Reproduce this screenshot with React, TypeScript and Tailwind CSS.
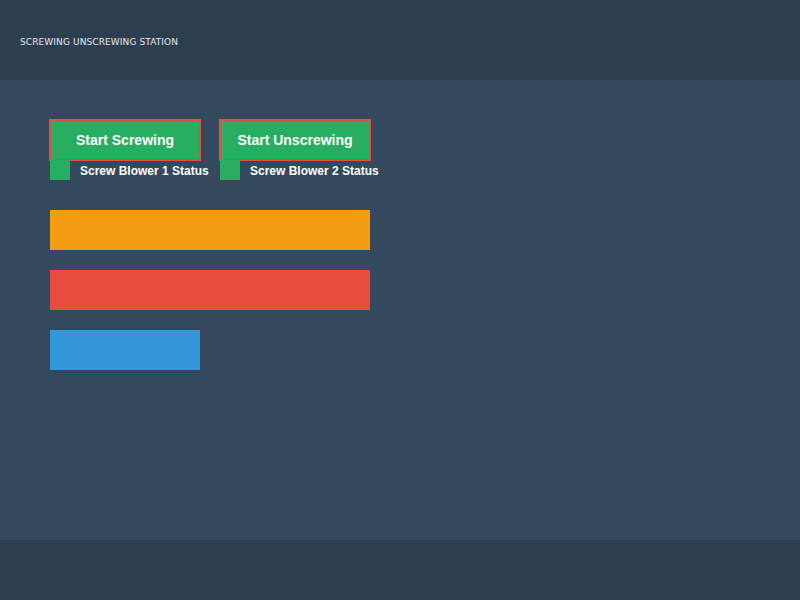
export default function App() {
  const stations = [
    { label: "Start Screwing", status: "Screw Blower 1 Status" },
    { label: "Start Unscrewing", status: "Screw Blower 2 Status" },
  ]

  return (
    <div className="w-[800px] h-[600px] flex flex-col font-['Liberation_Sans',Arial,sans-serif]">
      {/* Header */}
      <div className="h-[80px] bg-[#2c3e50] flex items-center pl-5 pt-[5px]">
        <span className="text-[9px] text-[#e6e9ec] font-['DejaVu_Sans',sans-serif] tracking-[0.1px]">
          SCREWING UNSCREWING STATION
        </span>
      </div>

      {/* Main */}
      <div className="h-[460px] bg-[#34495e] pt-[39px] pl-[49px]">
        <div className="flex gap-[18px]">
          {stations.map((s) => (
            <div key={s.label} className="w-[152px]">
              <button className="w-[152px] h-[42px] bg-[#27ae60] border-2 border-[#e74c3c] text-white font-bold text-[14px]">
                {s.label}
              </button>
              <div className="flex items-center gap-[10px] ml-px -mt-px">
                <div className="w-5 h-5 shrink-0 bg-[#27ae60]" />
                <span className="text-white font-bold text-[12px] whitespace-nowrap pt-[2px]">{s.status}</span>
              </div>
            </div>
          ))}
        </div>

        <div className="ml-px mt-[30px] flex flex-col gap-5">
          <div className="w-[320px] h-10 bg-[#f39c12]" />
          <div className="w-[320px] h-10 bg-[#e74c3c]" />
          <div className="w-[150px] h-10 bg-[#3498db]" />
        </div>
      </div>

      {/* Footer */}
      <div className="h-[60px] bg-[#2c3e50]" />
    </div>
  )
}
